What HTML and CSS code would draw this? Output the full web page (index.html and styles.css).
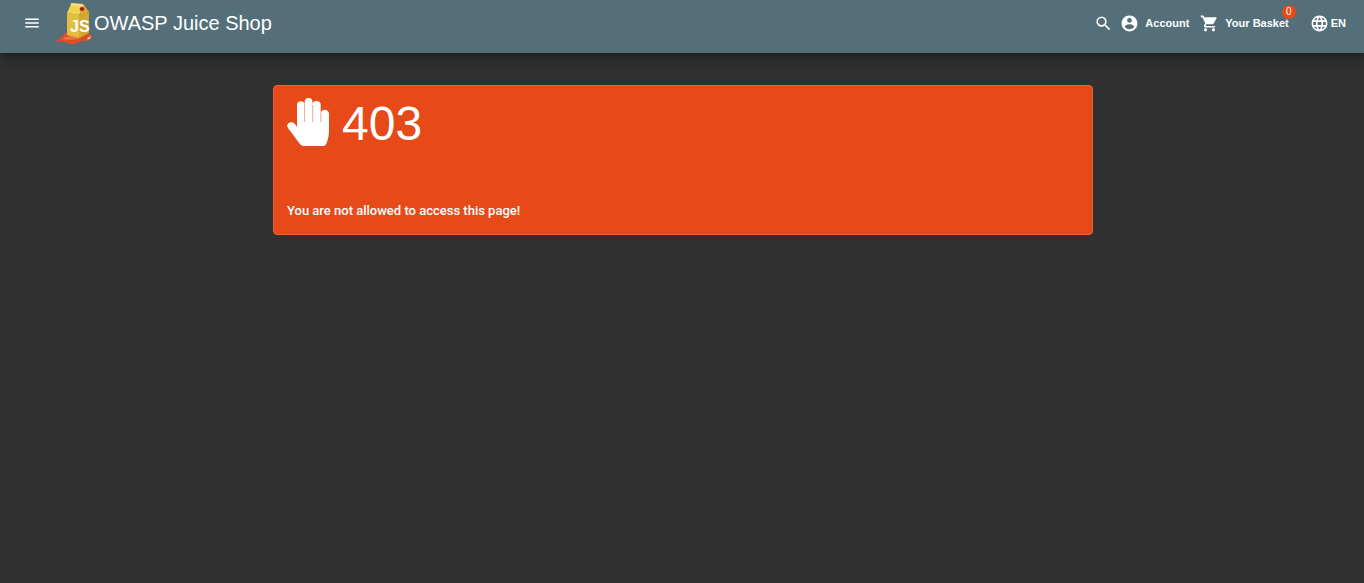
FILE: index.html
```html
<!DOCTYPE html>
<html lang="en">
<head>
<meta charset="utf-8">
<title>OWASP Juice Shop</title>
<link rel="stylesheet" href="styles.css">
</head>
<body>
<header class="toolbar">
  <button class="menu" type="button" aria-label="Open sidenav">
    <svg class="icon" viewBox="0 0 24 24"><path d="M3 18h18v-2H3v2zm0-5h18v-2H3v2zm0-7v2h18V6H3z"/></svg>
  </button>
  <a class="brand" href="#">
    <svg class="logo" viewBox="0 0 38 44" aria-hidden="true">
      <path fill="#d94f27" d="M0 41C6 39 7 32 12 32l11-1 12 2c3 1 2 5-2 7-4 1-6-1-9 1-5 4-11 2-15 0-3-1-8 1-9 0z"/>
      <path fill="#ef7040" d="M7 38c6-4 12-3 20-2-5 3-12 4-20 2z"/>
      <path fill="#e3bd3c" d="M12 12l12 2v23l-12-3z"/>
      <path fill="#d3a92f" d="M24 14l10-3v21l-10 5z"/>
      <path fill="#f2d34f" d="M12 12L16 3l13 1-5 10z"/>
      <path fill="#dcae31" d="M29 4l5 7-10 3z"/>
      <path fill="#f8e486" d="M16 2l12 1 1 2-13-1z"/>
      <ellipse cx="27" cy="8" rx="2.4" ry="2" fill="#a51e19"/>
      <ellipse cx="34" cy="37" rx="2" ry="1" fill="#f8c6ad" transform="rotate(-35 34 37)"/>
      <text x="15" y="31" class="logo-text">JS</text>
    </svg>
    <span>OWASP Juice Shop</span>
  </a>
  <nav class="actions">
    <button class="search" type="button" aria-label="Search">
      <svg class="icon" viewBox="0 0 24 24"><path d="M15.5 14h-.79l-.28-.27A6.47 6.47 0 0 0 16 9.5 6.5 6.5 0 1 0 9.5 16c1.61 0 3.09-.59 4.23-1.57l.27.28v.79l5 4.99L20.49 19l-4.99-5zm-6 0C7.01 14 5 11.99 5 9.5S7.01 5 9.5 5 14 7.01 14 9.5 11.99 14 9.5 14z"/></svg>
    </button>
    <button class="account" type="button">
      <svg class="icon" viewBox="0 0 24 24"><path d="M12 2C6.48 2 2 6.48 2 12s4.48 10 10 10 10-4.480 10-10S17.520 2 12 2zm0 3c1.660 0 3 1.340 3 3s-1.340 3-3 3-3-1.340-3-3 1.340-3 3-3zm0 14.200a7.200 7.200 0 0 1-6-3.220c.03-1.990 4-3.080 6-3.080 1.990 0 5.970 1.090 6 3.080a7.200 7.200 0 0 1-6 3.220z"/></svg>
      <span>Account</span>
    </button>
    <button class="basket" type="button">
      <svg class="icon" viewBox="0 0 24 24"><path d="M7 18c-1.1 0-1.99.9-1.99 2S5.9 22 7 22s2-.9 2-2-.9-2-2-2zM1 2v2h2l3.6 7.59-1.35 2.45c-.16.28-.25.61-.25.96 0 1.1.9 2 2 2h12v-2H7.42c-.14 0-.25-.11-.25-.25l.03-.12.9-1.63h7.45c.75 0 1.41-.41 1.75-1.03l3.58-6.49A1 1 0 0 0 20 4H5.21l-.94-2H1zm16 16c-1.1 0-1.99.9-1.99 2s.89 2 1.99 2 2-.9 2-2-.9-2-2-2z"/></svg>
      <span>Your Basket</span>
      <span class="badge">0</span>
    </button>
    <button class="language" type="button">
      <svg class="icon" viewBox="0 0 24 24"><path d="M11.99 2C6.47 2 2 6.48 2 12s4.47 10 9.99 10C17.52 22 22 17.52 22 12S17.52 2 11.99 2zm6.93 6h-2.95a15.65 15.65 0 0 0-1.38-3.56A8.03 8.03 0 0 1 18.92 8zM12 4.04c.83 1.2 1.48 2.53 1.91 3.96h-3.82c.43-1.43 1.08-2.76 1.91-3.96zM4.26 14C4.1 13.36 4 12.69 4 12s.1-1.36.26-2h3.38a16.5 16.5 0 0 0 0 4H4.26zm.82 2h2.95c.32 1.25.78 2.45 1.38 3.56A7.99 7.99 0 0 1 5.08 16zm2.95-8H5.08a7.99 7.99 0 0 1 4.33-3.56A15.65 15.65 0 0 0 8.03 8zM12 19.96A14.1 14.1 0 0 1 10.09 16h3.82A14.1 14.1 0 0 1 12 19.96zM14.34 14H9.66a14.7 14.7 0 0 1 0-4h4.68a14.7 14.7 0 0 1 0 4zm.25 5.56c.6-1.11 1.06-2.31 1.38-3.56h2.95a8.03 8.03 0 0 1-4.33 3.56zM16.36 14a16.5 16.5 0 0 0 0-4h3.38c.16.64.26 1.31.26 2s-.1 1.36-.26 2h-3.38z"/></svg>
      <span>EN</span>
    </button>
  </nav>
</header>
<main class="content">
  <section class="card">
    <h1 class="code">
      <svg class="hand" viewBox="0 0 42 48" aria-hidden="true"><path d="M10 29V7a3.700 3.700 0 0 1 7.700 0V4a3.800 3.800 0 0 1 7.800 0v3a3.800 3.800 0 0 1 8.200 0v9a4 4 0 0 1 8.300 0v17c0 4-1 8-2 11-.6 2.500-2 4-4 4H17c-2 0-3.500-1-4.500-2.500L1 30c-3-4 3-8 6.500-4.500z"/><path class="finger-gap" d="M17.600 6v18M25.700 7v17M33.900 15v9"/></svg>
      <span>403</span>
    </h1>
    <p class="message">You are not allowed to access this page!</p>
  </section>
</main>
</body>
</html>
```
FILE: styles.css
```css
* { box-sizing: border-box; }
body {
  margin: 0;
  min-height: 100vh;
  background: #303030;
  color: #fff;
  font-family: "Liberation Sans", Arial, sans-serif;
}
.toolbar {
  display: flex;
  align-items: center;
  height: 53px;
  padding: 0 18px 7px 23px;
  background: #546e7a;
  box-shadow: 0 3px 5px -1px rgba(0,0,0,.2), 0 6px 10px rgba(0,0,0,.14), 0 1px 18px rgba(0,0,0,.12);
}
button {
  display: flex;
  align-items: center;
  padding: 0;
  border: 0;
  background: none;
  color: inherit;
  font: bold 11px "Liberation Sans", Arial, sans-serif;
}
.icon { width: 19px; height: 19px; fill: currentColor; }
.menu .icon { width: 18px; height: 18px; }
.brand {
  display: flex;
  align-items: center;
  margin-left: 14px;
  gap: 1px;
  color: inherit;
  font-size: 20px;
  text-decoration: none;
}
.logo { width: 38px; height: 44px; }
.logo-text { font: bold 16px "Liberation Sans", sans-serif; fill: #fff; }
.actions { display: flex; align-items: center; margin-left: auto; }
.account { margin-left: 7px; gap: 6px; }
.basket { position: relative; margin-left: 11px; gap: 6px; }
.language { margin-left: 21px; gap: 2px; }
.badge {
  position: absolute;
  top: -9px;
  right: -7px;
  width: 14px;
  border-radius: 7px;
  background: #e64a19;
  font-size: 10px;
  font-weight: 400;
  line-height: 14px;
  text-align: center;
}
.content { padding: 32px 15px 32px 17px; }
.card {
  max-width: 820px;
  margin: 0 auto;
  padding: 12px 13px;
  border: 1px solid #ee5f31;
  border-radius: 4px;
  background: #e64a19;
}
.code {
  display: flex;
  align-items: flex-start;
  gap: 13px;
  margin: 0;
  font-size: 48px;
  font-weight: 400;
  line-height: 52px;
}
.hand { width: 42px; height: 48px; fill: #fff; }
.finger-gap { fill: none; stroke: #f3a78f; stroke-width: 1; }
.message { margin: 52px 0 2px; font: 500 13px/18px Roboto, sans-serif; }
```
